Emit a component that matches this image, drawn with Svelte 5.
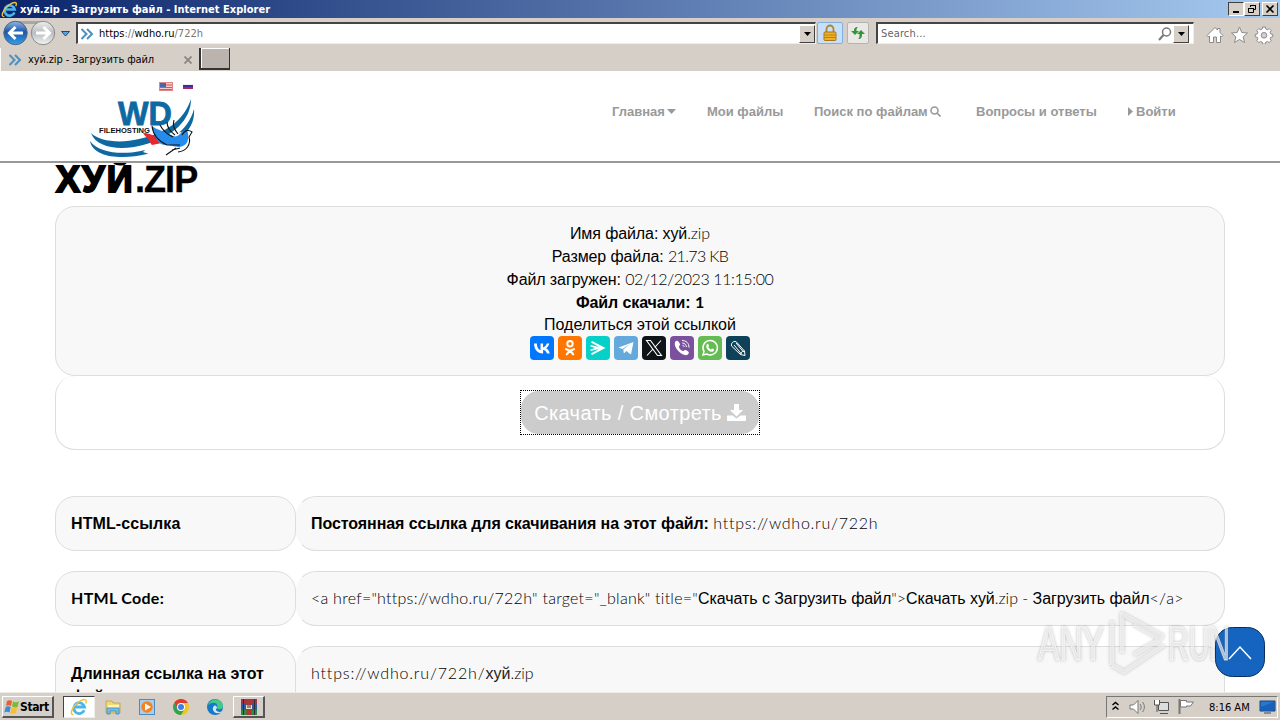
<script>
  const shares = [
    ['vk', '#0077ff'], ['ok', '#ff7700'], ['sf', '#07d0c9'], ['tg', '#64a9dc'],
    ['tw', '#0f1419'], ['vb', '#7b519d'], ['wa', '#65bc54'], ['lj', '#0d425a']
  ];
</script>

{#snippet chevrons()}
  <svg class="chev" width="14" height="14" viewBox="0 0 14 14" fill="none" stroke="#4a90c2" stroke-width="2"><path d="M1.500 2l5 5-5 5M7 2l5 5-5 5" /></svg>
{/snippet}
{#snippet ie(size)}
  <svg width={size} height={size} viewBox="0 0 18 18" fill="none">
    <path d="M14.200 12.200A5.400 5.400 0 1 1 14.500 9H5" stroke="#49b5ec" stroke-width="2.800" />
    <path d="M3.500 16.500C-1 17 2 9 8 4.500S18 1 15.600 5.500" stroke="#f2c335" stroke-width="1.500" />
  </svg>
{/snippet}
{#snippet arrowBtn()}
  <span class="drop"><svg width="7" height="4" viewBox="0 0 7 4"><path d="M0 0h7L3.500 4z" /></svg></span>
{/snippet}

<div class="screen">
  <div class="titlebar">
    {@render ie(17)}
    <b>хуй.zip - Загрузить файл - Internet Explorer</b>
    <div class="winbtns">
      <span class="pressed"><svg width="12" height="10"><path d="M3 8h6" stroke="#000" stroke-width="2" /></svg></span>
      <span><svg width="12" height="10" fill="none" stroke="#000"><path d="M4.500 3V1.500h5v4H8M4 1.500h6M2.500 4.500h5v4h-5zM2 4.500h6" /></svg></span>
      <span class="close"><svg width="12" height="10" stroke="#000" stroke-width="1.600"><path d="M2.500 1.500l7 7M9.500 1.500l-7 7" /></svg></span>
    </div>
  </div>

  <div class="navbar">
    <svg class="backfwd" width="74" height="28" viewBox="0 0 74 28">
      <defs>
        <linearGradient id="blue" x2="0" y2="1"><stop stop-color="#8fb8e6" /><stop offset=".45" stop-color="#1b56ad" /><stop offset="1" stop-color="#35a2e8" /></linearGradient>
        <linearGradient id="grey" x2="0" y2="1"><stop stop-color="#eee" /><stop offset=".5" stop-color="#b9bdc2" /><stop offset="1" stop-color="#f4f4f4" /></linearGradient>
      </defs>
      <path d="M15 2h28v3H15z" fill="#aaa7a3" />
      <circle cx="15.500" cy="14" r="11.700" fill="url(#blue)" stroke="#52647d" />
      <circle cx="43" cy="14" r="11.700" fill="url(#grey)" stroke="#8a8a8a" />
      <path d="M23 14H10M15.500 8l-6 6 6 6" fill="none" stroke="#fff" stroke-width="3" />
      <path d="M36 14h13M43.500 8l6 6-6 6" fill="none" stroke="#fff" stroke-width="3" />
      <path d="M61.500 12.500h8l-4 4.500z" fill="#58a6dc" stroke="#174a7c" />
    </svg>
    <div class="field address">
      {@render chevrons()}
      <span class="url">https<i>://</i>wdho.ru<i>/722h</i></span>
      {@render arrowBtn()}
    </div>
    <span class="tool lock"><svg width="16" height="18" viewBox="0 0 16 18"><path d="M4.500 8V5a3.500 3.500 0 0 1 7 0v3" fill="none" stroke="#ad8433" stroke-width="1.800" /><rect x="2" y="8" width="12" height="8.500" rx="1" fill="#eeb125" stroke="#a8751b" /><path d="M2.500 11h11M2.500 13.500h11" stroke="#b98220" /></svg></span>
    <span class="tool"><svg width="16" height="16" viewBox="0 0 16 16"><path d="M8 2C4.500 2 4 4 4 6H1l4 4 4-4H6.500c0-2 0-3 1.500-4zM8 14c3.500 0 4-2 4-5h3l-4-4-4 4h2.500c0 3 0 4-1.500 5z" fill="#31953a" /></svg></span>
    <div class="field search">
      <span>Search...</span>
      <svg class="glass" width="14" height="14" viewBox="0 0 14 14" fill="none" stroke="#777"><circle cx="8.500" cy="5" r="4" stroke-width="1.500" /><path d="M5.500 8L1 13" stroke-width="2" /></svg>
      {@render arrowBtn()}
    </div>
    <svg class="cmd" width="68" height="18" viewBox="0 0 68 18" fill="#fff" stroke="#8b8b8b">
      <path d="M1 9.500L9 1.500l2.500 2.500V2.500H14v4l3 3-1.200 1.300L14.500 10v6.500h-4V11h-3v5.500h-4V10l-1.300.8z" />
      <path d="M33.500 1l2.300 5.500 5.700.5-4.300 3.800 1.300 5.700-5-3-5 3 1.300-5.700L25.500 7l5.700-.5z" />
      <path d="M56.600 1h2.800l.4 2 1.600.7 1.800-1.100 2 2-1.100 1.800.7 1.600 2 .4v2.400l-2 .4-.7 1.600 1.100 1.800-2 2-1.800-1.100-1.600.7-.4 1.800h-2.800l-.4-1.800-1.600-.7-1.800 1.100-2-2 1.100-1.800-.7-1.600-2-.4V8.400l2-.4.7-1.600-1.100-1.800 2-2 1.800 1.100 1.600-.7z" /><circle cx="58" cy="9.300" r="2.800" fill="#d5cfc8" />
    </svg>
  </div>

  <div class="tabs">
    <div class="tab">{@render chevrons()}<span>хуй.zip - Загрузить файл</span>
      <svg class="x" width="8" height="8" stroke="#8b8681" stroke-width="1.800"><path d="M.5.500l7 7M7.500.500l-7 7" /></svg></div>
    <div class="newtab"></div>
  </div>

  <div class="page">
    <header>
      <svg class="logo" width="110" height="82" viewBox="0 0 110 82">
        <rect x="72.500" y="5.500" width="13" height="8" fill="#f8c9c9" stroke="#d88" /><path d="M79 8h6M73 10.500h12M73 12.500h12" stroke="#d55" /><path d="M73 6h6v4h-6z" fill="#4766b5" />
        <path d="M96 7h10v1H96z" fill="#ececf6" /><path d="M96 8h10v2.500H96z" fill="#35319c" /><path d="M96 10h10v2H96z" fill="#b4245b" />
        <path d="M4 56C12 64 32 67 52 62 80 56 97 43 104 22 104 43 86 60 56 68 34 74 9 71 4 56z" fill="#0d69a2" />
        <path d="M3 64C12 76 34 78 54 74 80 67 101 55 107 32 109 54 88 70 60 77 36 83 6 81 3 64z" fill="#0d69a2" />
        <path d="M69 62l25-7 14 10-12 14-22 2-18-6 10-10z" fill="#fff" />
        <text x="31" y="48" class="wd" textLength="54" lengthAdjust="spacingAndGlyphs">WD</text>
        <text x="12" y="56" class="host" textLength="51" lengthAdjust="spacingAndGlyphs">FILEHOSTING</text>
        <path d="M56 56c6 0 12 2 19 10l-10 2c-2-1-1-3-3-4 0-3-4-4-6-8z" fill="#e6282b" />
        <path d="M65 49c4 4 13 5 19 9 4 2 6 2 9-1 3-4 7-4 8-1 1 8-1 13-9 14-7 0-9-3-15-2-6-1-11-10-12-19z" fill="#268cec" />
        <path d="M65 49c1 9 6 15 15 19h13M73 48c3 6 6 9 13 12M80 45c0 6 4 10 8 13M87 43c-2 6 1 10 4 14M91 75c9-1 13-8 11-15l3-5c-4-3-8-1-10 3M79 78l10-7M85 73l8-2" fill="none" stroke="#111" stroke-width="1.100" />
      </svg>
      <nav>
        <span class="n1">Главная <svg width="9" height="5"><path d="M0 0h9L4.500 5z" fill="#999" /></svg></span>
        <span class="n2">Мои файлы</span>
        <span class="n3">Поиск по файлам <svg width="11" height="11" viewBox="0 0 11 11" fill="none" stroke="#999" stroke-width="1.600"><circle cx="4.500" cy="4.500" r="3.500" /><path d="M7 7l3.500 3.500" /></svg></span>
        <span class="n4">Вопросы и ответы</span>
        <span class="n5"><svg width="5" height="9"><path d="M0 0l5 4.500L0 9z" fill="#999" /></svg> Войти</span>
      </nav>
    </header>

    <main>
      <h1>ХУЙ<span>.ZIP</span></h1>
      <section class="card info">
        <p>Имя файла: хуй<span class="r">.zip</span></p>
        <p>Размер файла: <span class="r size">21.73 KB</span></p>
        <p>Файл загружен: <span class="r date">02/12/2023 11:15:00</span></p>
        <p class="strong">Файл скачали: <span class="r">1</span></p>
        <p class="sharing">Поделиться этой ссылкой</p>
        <div class="shares">
          {#each shares as [id, color]}
            <svg width="24" height="24" viewBox="0 0 24 24" fill="none" stroke="#fff" stroke-width="1.500">
              <rect width="24" height="24" rx="4" fill={color} stroke="none" />
              {#if id === 'vk'}<path stroke="none" fill="#fff" d="M12.800 17.500C7.500 17.500 4.300 13.800 4 7.500h2.900c.1 4.500 2.200 6.300 3.600 6.600V7.500h2.600v3.900c1.500-.2 3-2 3.600-3.900h2.600c-.4 2.300-2.100 4-3.200 4.700 1.100.5 3 2 3.700 5.300H17c-.6-1.900-2-3.300-3.900-3.500v3.500z" />
              {:else if id === 'ok'}<circle cx="12" cy="7.800" r="2.700" stroke-width="2" /><path stroke-width="2.100" stroke-linecap="round" d="M8 13.200c2.500 1.600 5.500 1.600 8 0M12 14.500l-3.200 3.800M12 14.500l3.200 3.800" />
              {:else if id === 'sf'}<path fill="#fff" stroke="none" d="M6 5l13.500 7L6 19l-1-1.500 8-4.500-8.500 2v-1.500L9 12l-4.500-1.500V9l8.500 2-8-4.500z" />
              {:else if id === 'tg'}<path fill="#fff" stroke="none" d="M4.500 11.500L19.500 6 17 18.500l-4.800-3.400-2.300 2.300-.6-3.800L16 8l-7.600 5z" />
              {:else if id === 'tw'}<path stroke-width="1.100" d="M4.500 4.500h4l11 15h-4zM19 4.500l-6.300 7M11 13l-6 6.500" />
              {:else if id === 'vb'}<path fill="#fff" stroke="none" d="M5 6c2-3 4-.5 5 2 .5 1.300-1 1.700-1.100 2.500.5 2.500 2 4 4.200 4.600.8 0 1.300-1.700 2.600-1 2.800 1.500 4.500 2.500 1.800 4.700C13.500 21 3 12.500 5 6z" /><path stroke-width="1" d="M12 4.500c4 0 7 2.500 7 7M12.300 7c2.500.2 4 1.800 4.200 4M12.600 9.300c1 .1 1.500.6 1.600 1.700" />
              {:else if id === 'wa'}<path d="M5 19l1-3.600a7.200 7.200 0 1 1 2.700 2.600z" /><path fill="#fff" stroke="none" d="M9 8c1-.5 1.400 0 2 2l-.7 1.100c.6 1.300 1.500 2 2.700 2.500l1-1c2 .8 2.300 1 2 1.800-1 2-3.500 1.500-5.500 0S7.500 10 9 8z" />
              {:else}<path stroke-width="1" d="M5.500 10c-.5-3 1.500-5 4.500-4.500l8.500 9.500.5 4.500-4.500-1zM8 9l7.500 9M10 7l7.500 9M14.500 18.500c.3-2 1.500-3.300 4-3.500" />{/if}
            </svg>
          {/each}
        </div>
      </section>
      <section class="card action">
        <div class="focus"><button>Скачать / Смотреть <svg width="19" height="17" viewBox="0 0 19 17" fill="#fff"><path d="M7 0h5v6h4l-6.500 6.500L3 6h4zM0 11.500h5.500l4 3 4-3H19V17H0z" /></svg></button></div>
      </section>

      <div class="rows">
        <div class="row">
          <div class="card label html">HTML-ссылка</div>
          <div class="card value"><b>Постоянная ссылка для скачивания на этот файл:</b> <span class="r url1">https://wdho.ru/722h</span></div>
        </div>
        <div class="row">
          <div class="card label"><span class="latin">HTML Code:</span></div>
          <div class="card value"><span class="r code">&lt;a href="https://wdho.ru/722h" target="_blank" title="</span><span class="cyr">Скачать с Загрузить файл</span><span class="r">"&gt;</span><span class="cyr">Скачать хуй</span><span class="r zip">.zip -{' '}</span><span class="cyr">Загрузить файл</span><span class="r code">&lt;/a&gt;</span></div>
        </div>
        <div class="row last">
          <div class="card label">Длинная ссылка на этот файл:</div>
          <div class="card value"><span class="r url2">https://wdho.ru/722h/</span><span class="dim">хуй</span><span class="r">.zip</span></div>
        </div>
      </div>
    </main>

    <svg class="totop" width="50" height="50" viewBox="0 0 50 50" fill="none"><rect x=".5" y=".5" width="49" height="49" rx="17" fill="#1565c0" stroke="#0b2d5c" /><path d="M14 32l11-12 11 12" stroke="#fff" stroke-width="1.500" /></svg>
    <svg class="mark" width="200" height="70" viewBox="0 0 200 70">
      <text x="2" y="51" textLength="66" lengthAdjust="spacingAndGlyphs">ANY</text>
      <text x="132" y="51" textLength="62" lengthAdjust="spacingAndGlyphs">RUN</text>
      <path d="M76 56V12M86 44V5l42 23M76 56l12 7 40-27M98 46l26-16-26-15" />
    </svg>
  </div>

  <div class="taskbar">
    <div class="start"><svg width="16" height="16" viewBox="0 0 16 16"><path d="M3 2q2.500-1.500 5 0L7 7Q4.500 5.500 2 7z" fill="#e8602c" /><path d="M9 2.500q2.500 1.500 6 0L13.500 8Q11 9 8 7.500z" fill="#7db83a" /><path d="M1.700 8q2.500-1.500 5 0l-1.200 5.500Q3 12 .3 13.500z" fill="#3f8ade" /><path d="M7.700 8.500q2.500 1.500 5.500 0L12 14q-2.500 1.500-5.500 0z" fill="#f7c02c" /></svg><b>Start</b></div>
    <div class="task on">{@render ie(18)}</div>
    <div class="task"><svg width="18" height="18" viewBox="0 0 18 18"><path d="M2 3h6l1 2h7v10H2z" fill="#efd77a" stroke="#c6a94c" /><path d="M4 7h11v3H4z" fill="#fff4ba" /><path d="M3 16v-6h12v6h-3v-3H6v3z" fill="#76bce0" stroke="#4696c4" /></svg></div>
    <div class="task"><svg width="18" height="18" viewBox="0 0 18 18"><rect x="1.500" y="1.500" width="15" height="15" fill="#a9cdea" stroke="#4a8cc0" /><circle cx="9" cy="9" r="5.700" fill="#f3821f" /><path d="M7 5.500l6 3.500-6 3.500z" fill="#fff" /></svg></div>
    <div class="task"><svg width="16" height="16" viewBox="0 0 16 16"><circle cx="8" cy="8" r="8" fill="#f4c51f" /><path d="M1.100 4A8 8 0 0 1 15 4H8L4.500 10z" fill="#df3c30" /><path d="M1.100 4A8 8 0 0 0 8 16l3.500-6H5z" fill="#31a350" /><circle cx="8" cy="8" r="4" fill="#fff" /><circle cx="8" cy="8" r="3" fill="#3c7fe8" /></svg></div>
    <div class="task"><svg width="16" height="16" viewBox="0 0 16 16"><circle cx="8" cy="8" r="8" fill="#1578c8" /><path d="M1 6C3-1 15-2 16 7c0 4-5 4-6 2 2-5-4-7-9-3z" fill="#45c988" /><path d="M7 7c-3 3 0 8 5 7 1 0 2-.5 3-1.500C11 14 7 11 10 9c0-2-2-3-3-2z" fill="#cce9f0" /></svg></div>
    <div class="task run"><svg width="16" height="16" viewBox="0 0 16 16"><path d="M0 0h16v5H0z" fill="#a33344" /><path d="M0 5h16v6H0z" fill="#35589d" /><path d="M0 11h16v5H0z" fill="#298b47" /><path d="M5.500 0h5v16h-5z" fill="#ae382f" /><path d="M5 6h6v4H5z" fill="#e8dfcf" /><path d="M7 6v3M9 6v3M2.500 0v16M13.500 0v16" stroke="#332b36" /></svg></div>
    <div class="tray">
      <svg width="86" height="20" viewBox="0 0 86 20" fill="none" stroke="#777">
        <path d="M4.500 8L7.500 5.500l3 2.500M4.500 12.500l3-2.500 3 2.500" stroke="#000" stroke-width="1.500" />
        <path d="M22 8h3.500L30 3.500v13L25.500 12H22z" fill="#fff" /><path d="M32 7c1.500 2 1.500 4 0 6M34.500 5c2.500 3 2.500 7 0 10" />
        <path d="M50.500 5.500h10v8h-10zM52 16.500h8" fill="#ddd" stroke="#555" /><path d="M46.500 3v5h5V3M49 8v7" fill="#fff" stroke="#555" />
        <path d="M71.500 2v15" stroke="#777" stroke-width="2" /><path d="M72.500 3.500h6v1.500h7l-3 4h-4V10h-6z" fill="#fff" />
      </svg>
      <span class="clock">8:16 AM</span>
      <svg width="17" height="15" viewBox="0 0 17 15"><path d="M1 1h15v10H1z" fill="#2877d0" stroke="#15437e" /><path d="M1.500 10.500V7L15 2v8.500z" fill="#1860b8" /><path d="M5 11h7v3H5z" fill="#889" /></svg>
    </div>
  </div>
</div>

<style>
  :global(body) { background: #fff; overflow: hidden; }
  .screen { width: 1280px; height: 720px; display: flex; flex-direction: column; background: #d5cfc8; font: 11px "DejaVu Sans Condensed", "DejaVu Sans", sans-serif; font-stretch: condensed; color: #000; overflow: hidden; white-space: nowrap; }
  .screen * { box-sizing: border-box; }
  svg { display: block; flex: none; }
  .titlebar { height: 18px; flex: none; display: flex; align-items: center; background: linear-gradient(90deg, #0b246a, #a6caf0); padding: 0 2px 0 1px; color: #fff; }
  .titlebar b { margin-left: 2px; letter-spacing: .03px; }
  .winbtns { display: flex; margin-left: auto; }
  .winbtns span { width: 16px; height: 14px; background: #d5cfc8; border: 1px solid; border-color: #fff #404040 #404040 #fff; display: flex; align-items: center; justify-content: center; }
  .winbtns .pressed { border-color: #404040 #fff #fff #404040; }
  .winbtns .close { margin-left: 2px; }
  .navbar { height: 30px; flex: none; display: flex; align-items: center; }
  .backfwd { margin-right: 2px; }
  .field { height: 22px; display: flex; align-items: center; background: #fff; border: solid #444; border-width: 2px 1px 1px 2px; border-right-color: #eee; border-bottom-color: #eee; }
  .address { width: 740px; padding: 0 0 0 2px; }
  .url { margin-left: 5px; }
  i { font-style: normal; color: #777; }
  .drop { margin-left: auto; width: 16px; height: 18px; background: #d5cfc8; border: 1px solid; border-color: #fff #404040 #404040 #fff; display: flex; align-items: center; justify-content: center; }
  .tool { width: 22px; height: 22px; display: flex; align-items: center; justify-content: center; border: 1px solid #b4b4b4; border-radius: 2px; background: #eae8e5; }
  .tool.lock { background: #c8dff8; border-color: #7fb0e4; width: 26px; margin-left: 1px; }
  .tool + .tool { margin-left: 4px; }
  .search { width: 318px; margin-left: 7px; padding: 0 4px 0 3px; color: #666; letter-spacing: .15px; }
  .glass { margin-left: auto; margin-right: 1px; }
  .glass + .drop { margin-left: 0; }
  .cmd { margin-left: 12px; margin-top: 3px; }
  .tabs { height: 23px; flex: none; display: flex; align-items: flex-start; }
  .tab { width: 199px; height: 23px; display: flex; align-items: center; padding-left: 7px; border-left: 1px solid #fff; }
  .tab span { margin-left: 6px; letter-spacing: -.12px; }
  .tab .x { margin: 0 7px 0 auto; }
  .newtab { width: 31px; height: 22px; background: #bbb3ad; border: solid #333; border-width: 0 1px 2px 2px; box-shadow: inset 1px 1px #fff; }

  .page { height: 621px; flex: none; position: relative; background: #fff; overflow: hidden; font-family: "Liberation Sans", sans-serif; font-stretch: normal; }
  header { position: relative; z-index: 1; height: 92px; background: #fff; border-bottom: 2px solid #999; display: flex; padding-left: 87px; }
  .logo { margin-top: 6px; }
  .wd { font: bold 34px "Liberation Sans", sans-serif; fill: #0d69a2; stroke: #0d69a2; stroke-width: .8; }
  .host { font: bold 8px "Liberation Sans", sans-serif; fill: #111; }
  nav { display: flex; margin-left: 415px; margin-top: 33px; font-size: 13px; font-weight: bold; color: #999; line-height: 15px; }
  nav span { display: flex; align-items: center; gap: 2px; height: 15px; }
  .n1 { width: 95px; } .n2 { width: 107px; } .n3 { width: 162px; } .n4 { width: 152px; } .n5 { gap: 3px; }
  main { width: 1170px; margin: 0 auto; font-size: 16px; }
  h1 { margin: 0; height: 43px; padding-left: 1px; font: 900 36px/34px "Liberation Sans", sans-serif; letter-spacing: 2.200px; -webkit-text-stroke: 2px #000; }
  h1 span { letter-spacing: -.9px; -webkit-text-stroke: .3px #000; }
  .card { background: #f8f8f8; border: 1px solid #ddd; border-radius: 20px; }
  .info { height: 170px; padding-top: 15px; text-align: center; }
  p { margin: 0; height: 23px; line-height: 24px; letter-spacing: -.1px; }
  .r { font-family: Lato, sans-serif; font-weight: 300; line-height: 0; color: #000; }
  .date { letter-spacing: -.4px; }
  .size { letter-spacing: -.65px; }
  .strong, .strong .r { font-weight: bold; }
  .sharing { height: 22px; line-height: 21px; letter-spacing: 0; }
  .shares { display: flex; justify-content: center; gap: 4px; }
  .action { height: 74px; background: #fff; border-top: 0; display: flex; justify-content: center; padding-top: 14px; }
  .focus { width: 240px; height: 45px; border: 1px dotted #000; }
  button { width: 238px; height: 43px; border: 0; border-radius: 18px; background: #ccc; color: #fff; padding: 1px 0 0; display: flex; align-items: center; justify-content: center; gap: 5px; font: 20px "Liberation Sans", sans-serif; letter-spacing: .38px; }
  button svg { margin-top: -2px; }
  .rows { margin-top: 46px; }
  .row { display: flex; height: 55px; margin-bottom: 20px; line-height: 23px; }
  .row .card { padding: 15px 14px; }
  .row .label { width: 241px; font-weight: bold; white-space: normal; padding-left: 15px; }
  .html { letter-spacing: .1px; }
  .latin { font-family: Lato, sans-serif; letter-spacing: .3px; line-height: 0; }
  .value { flex: 1; border-left-color: transparent; }
  .value b { letter-spacing: -.07px; }
  .url1 { letter-spacing: .75px; }
  .url2 { letter-spacing: .83px; }
  .code { letter-spacing: .25px; }
  .zip { letter-spacing: 0; }
  .cyr { letter-spacing: -.06px; }
  .dim { color: #222; }
  .row.last { height: 80px; }
  .totop { position: absolute; left: 1215px; top: 556px; }
  .mark { position: absolute; left: 1036px; top: 538px; font: 48px "Liberation Sans", sans-serif; fill: rgba(255, 255, 255, .6); stroke: rgba(255, 255, 255, .6); stroke-width: 1; filter: drop-shadow(0 0 1.500px rgba(90, 90, 90, .6)); }
  .mark path { fill: none; stroke-width: 4.500; stroke-linejoin: round; }

  .taskbar { height: 28px; flex: none; display: flex; align-items: center; border-top: 1px solid #eeeae5; padding: 1px 2px 0; }
  .start { width: 52px; height: 22px; display: flex; align-items: center; padding-left: 1px; border: solid; border-width: 1px 2px 2px 1px; border-color: #fff #555 #555 #fff; font-size: 12px; letter-spacing: -.4px; }
  .task { width: 32px; height: 22px; margin-right: 2px; display: flex; align-items: center; justify-content: center; }
  .task.on { margin-left: 9px; background: #fff; border: 1px solid #444; border-right-color: #eee; border-bottom-color: #eee; }
  .task.run { border: solid; border-width: 1px 2px 2px 1px; border-color: #fff #555 #555 #fff; }
  .tray { margin-left: auto; width: 172px; height: 22px; display: flex; align-items: center; border: 1px solid #777; border-right-color: #fff; border-bottom-color: #fff; padding: 0 1px; }
  .clock { width: 42px; margin: 0 8px 0 15px; font-size: 11px; }
</style>
